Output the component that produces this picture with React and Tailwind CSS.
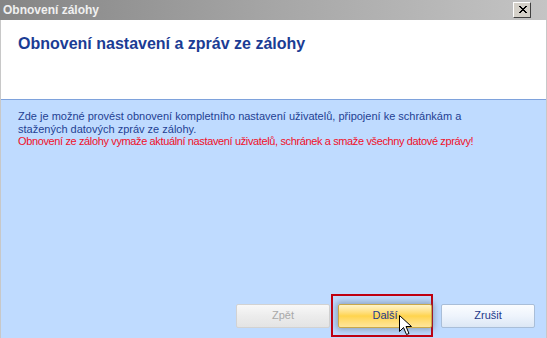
import React from 'react'

function Cursor() {
    return (
        <svg className="absolute left-[399px] top-[315px]" width="14" height="21" viewBox="0 0 14 21">
            <path d="M0.5 0.5 L0.5 16.5 L4.5 12.5 L7.5 19.5 L10 18.5 L7 11.5 L12.5 11.5 Z" fill="#fff" stroke="#000" strokeWidth="1" />
        </svg>
    )
}

export default function App() {
    return (
        <div className="relative w-[547px] h-[338px] overflow-hidden bg-[#bfdbff] font-['Liberation_Sans',Arial,sans-serif]">
            {/* Title bar */}
            <div className="h-[20px] flex items-center justify-between pl-[3px] pr-[16px] bg-gradient-to-r from-[#858585] via-[#a6a6a6] to-[#c4c4c4]">
                <span className="text-[12px] font-bold text-[#f0f0f0] leading-none">Obnovení zálohy</span>
                <div className="w-[18px] h-[16px] bg-[#d4d0c8] border border-t-white border-l-white border-r-[#404040] border-b-[#404040] flex items-center justify-center">
                    <svg width="9" height="8" viewBox="0 0 9 8">
                        <path d="M1 0 L8 7 M8 0 L1 7 M2 0 L9 7 M9 0 L2 7" stroke="#000" strokeWidth="1" />
                    </svg>
                </div>
            </div>

            <div className="h-[318px] flex flex-col border-l border-r border-[#c8c8c8]">
                {/* Header */}
                <div className="h-[79px] bg-white px-[17px] pt-[14px]">
                    <h1 className="text-[16px] font-bold text-[#1b3c94] leading-[20px]">Obnovení nastavení a zpráv ze zálohy</h1>
                </div>

                {/* Content */}
                <div className="flex-1 flex flex-col border-t border-[#7ea2dc] bg-[#bfdbff] pl-[17px] pr-[11px] pt-[10px] pb-[1px]">
                    <p className="text-[11px] leading-[12.5px] text-[#233f93]">
                        Zde je možné provést obnovení kompletního nastavení uživatelů, připojení ke schránkám a
                        <br />
                        stažených datových zpráv ze zálohy.
                    </p>
                    <p className="text-[11px] leading-[12.5px] tracking-[-0.37px] text-[#f0102a]">
                        Obnovení ze zálohy vymaže aktuální nastavení uživatelů, schránek a smaže všechny datové zprávy!
                    </p>

                    <div className="mt-auto flex justify-end items-center">
                        <button className="w-[94px] h-[24px] rounded-[2px] border border-[#d2d2d2] bg-gradient-to-b from-[#f8f8f8] via-[#ececec] to-[#e4e4e4] text-[11px] text-[#a8a8a8]">
                            Zpět
                        </button>
                        <div className="ml-[1px] w-[102px] h-[43px] border-2 border-[#c00010] flex items-center pl-[5px]">
                            <button className="shrink-0 w-[94px] h-[24px] rounded-[2px] border border-[#c9a84a] bg-gradient-to-b from-[#fff4c8] via-[#ffd44c] to-[#ffe69a] text-[11px] text-[#1e3a8a] shadow-[0_0_6px_2px_rgba(80,90,110,0.45)]">
                                Další
                            </button>
                        </div>
                        <button className="ml-[8px] w-[94px] h-[24px] rounded-[2px] border border-[#a9bed8] bg-gradient-to-b from-[#fbfdff] via-[#eef4fc] to-[#dce7f5] text-[11px] text-[#1e3a8a]">
                            Zrušit
                        </button>
                    </div>
                </div>
            </div>
            <Cursor />
        </div>
    )
}
